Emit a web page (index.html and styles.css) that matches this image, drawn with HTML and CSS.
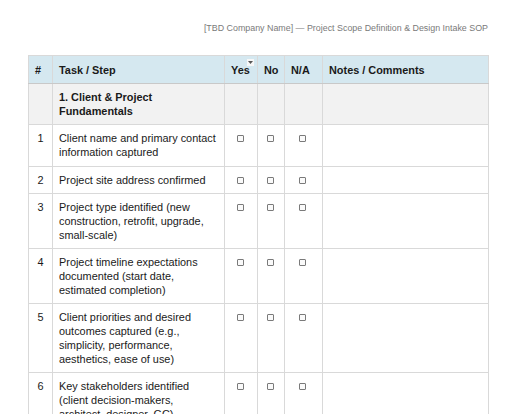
FILE: index.html
```html
<!DOCTYPE html>
<html>
<head>
<meta charset="utf-8">
<link rel="stylesheet" href="styles.css">
</head>
<body>
<div class="page">
  <div class="doc-title">[TBD Company Name] — Project Scope Definition &amp; Design Intake SOP</div>
  <table class="sop">
    <colgroup>
      <col class="c-num"><col class="c-task"><col class="c-yes"><col class="c-no"><col class="c-na"><col class="c-notes">
    </colgroup>
    <thead>
      <tr>
        <th>#</th>
        <th>Task / Step</th>
        <th class="yes-head">Yes<span class="sort-btn"><svg width="5" height="3" viewBox="0 0 5 3"><path d="M0 0h5L2.5 3z" fill="#555"/></svg></span></th>
        <th>No</th>
        <th>N/A</th>
        <th>Notes / Comments</th>
      </tr>
    </thead>
    <tbody>
      <tr class="section">
        <td></td>
        <td>1. Client &amp; Project Fundamentals</td>
        <td></td><td></td><td></td><td></td>
      </tr>
      <tr class="first-row">
        <td class="num">1</td>
        <td>Client name and primary contact information captured</td>
        <td class="chk"><span class="box"></span></td>
        <td class="chk"><span class="box"></span></td>
        <td class="chk"><span class="box"></span></td>
        <td></td>
      </tr>
      <tr>
        <td class="num">2</td>
        <td>Project site address confirmed</td>
        <td class="chk"><span class="box"></span></td>
        <td class="chk"><span class="box"></span></td>
        <td class="chk"><span class="box"></span></td>
        <td></td>
      </tr>
      <tr>
        <td class="num">3</td>
        <td>Project type identified (new construction, retrofit, upgrade, small-scale)</td>
        <td class="chk"><span class="box"></span></td>
        <td class="chk"><span class="box"></span></td>
        <td class="chk"><span class="box"></span></td>
        <td></td>
      </tr>
      <tr>
        <td class="num">4</td>
        <td>Project timeline expectations documented (start date, estimated completion)</td>
        <td class="chk"><span class="box"></span></td>
        <td class="chk"><span class="box"></span></td>
        <td class="chk"><span class="box"></span></td>
        <td></td>
      </tr>
      <tr>
        <td class="num">5</td>
        <td>Client priorities and desired outcomes captured (e.g., simplicity, performance, aesthetics, ease of use)</td>
        <td class="chk"><span class="box"></span></td>
        <td class="chk"><span class="box"></span></td>
        <td class="chk"><span class="box"></span></td>
        <td></td>
      </tr>
      <tr>
        <td class="num">6</td>
        <td>Key stakeholders identified (client decision-makers, architect, designer, GC)</td>
        <td class="chk"><span class="box"></span></td>
        <td class="chk"><span class="box"></span></td>
        <td class="chk"><span class="box"></span></td>
        <td></td>
      </tr>
    </tbody>
  </table>
</div>
</body>
</html>
```
FILE: styles.css
```css
html, body {
  margin: 0;
  padding: 0;
  background: #ffffff;
}
body {
  font-family: "Liberation Sans", Arial, Helvetica, sans-serif;
  color: #1a1a1a;
}
.page {
  padding: 22px 36px 0 28px;
}
.doc-title {
  text-align: right;
  font-size: 8.9px;
  line-height: 12px;
  color: #7a7a7a;
  margin-bottom: 21px;
}
.sop {
  width: 460px;
  border-collapse: collapse;
  table-layout: fixed;
  font-size: 10.9px;
  line-height: 14px;
}
.c-num { width: 24px; }
.c-task { width: 172px; }
.c-yes { width: 33px; }
.c-no { width: 27px; }
.c-na { width: 38px; }
.c-notes { width: 166px; }
.sop th, .sop td {
  border: 1px solid #d9d9d9;
  padding: 6px;
  text-align: left;
  vertical-align: top;
}
.sop thead th {
  background: #d5e8f0;
  font-weight: bold;
  padding-top: 7px;
  padding-bottom: 6px;
  border-bottom-color: #c9c9c9;
}
.yes-head {
  position: relative;
}
.sort-btn {
  position: absolute;
  top: 3px;
  right: 3px;
  width: 7px;
  height: 7px;
  background: #f7f7f7;
  display: flex;
  align-items: center;
  justify-content: center;
}
.section td {
  background: #f2f2f2;
  font-weight: bold;
}
.first-row td {
  padding-bottom: 7px;
}
.num {
  text-align: center !important;
}
.chk {
  text-align: center !important;
  padding-left: 4px !important;
  padding-right: 6px !important;
}
.box {
  display: inline-block;
  width: 5px;
  height: 5px;
  border: 1px solid #7a7a7a;
  border-radius: 1px;
  background: #fafafa;
  vertical-align: 0px;
}
```
